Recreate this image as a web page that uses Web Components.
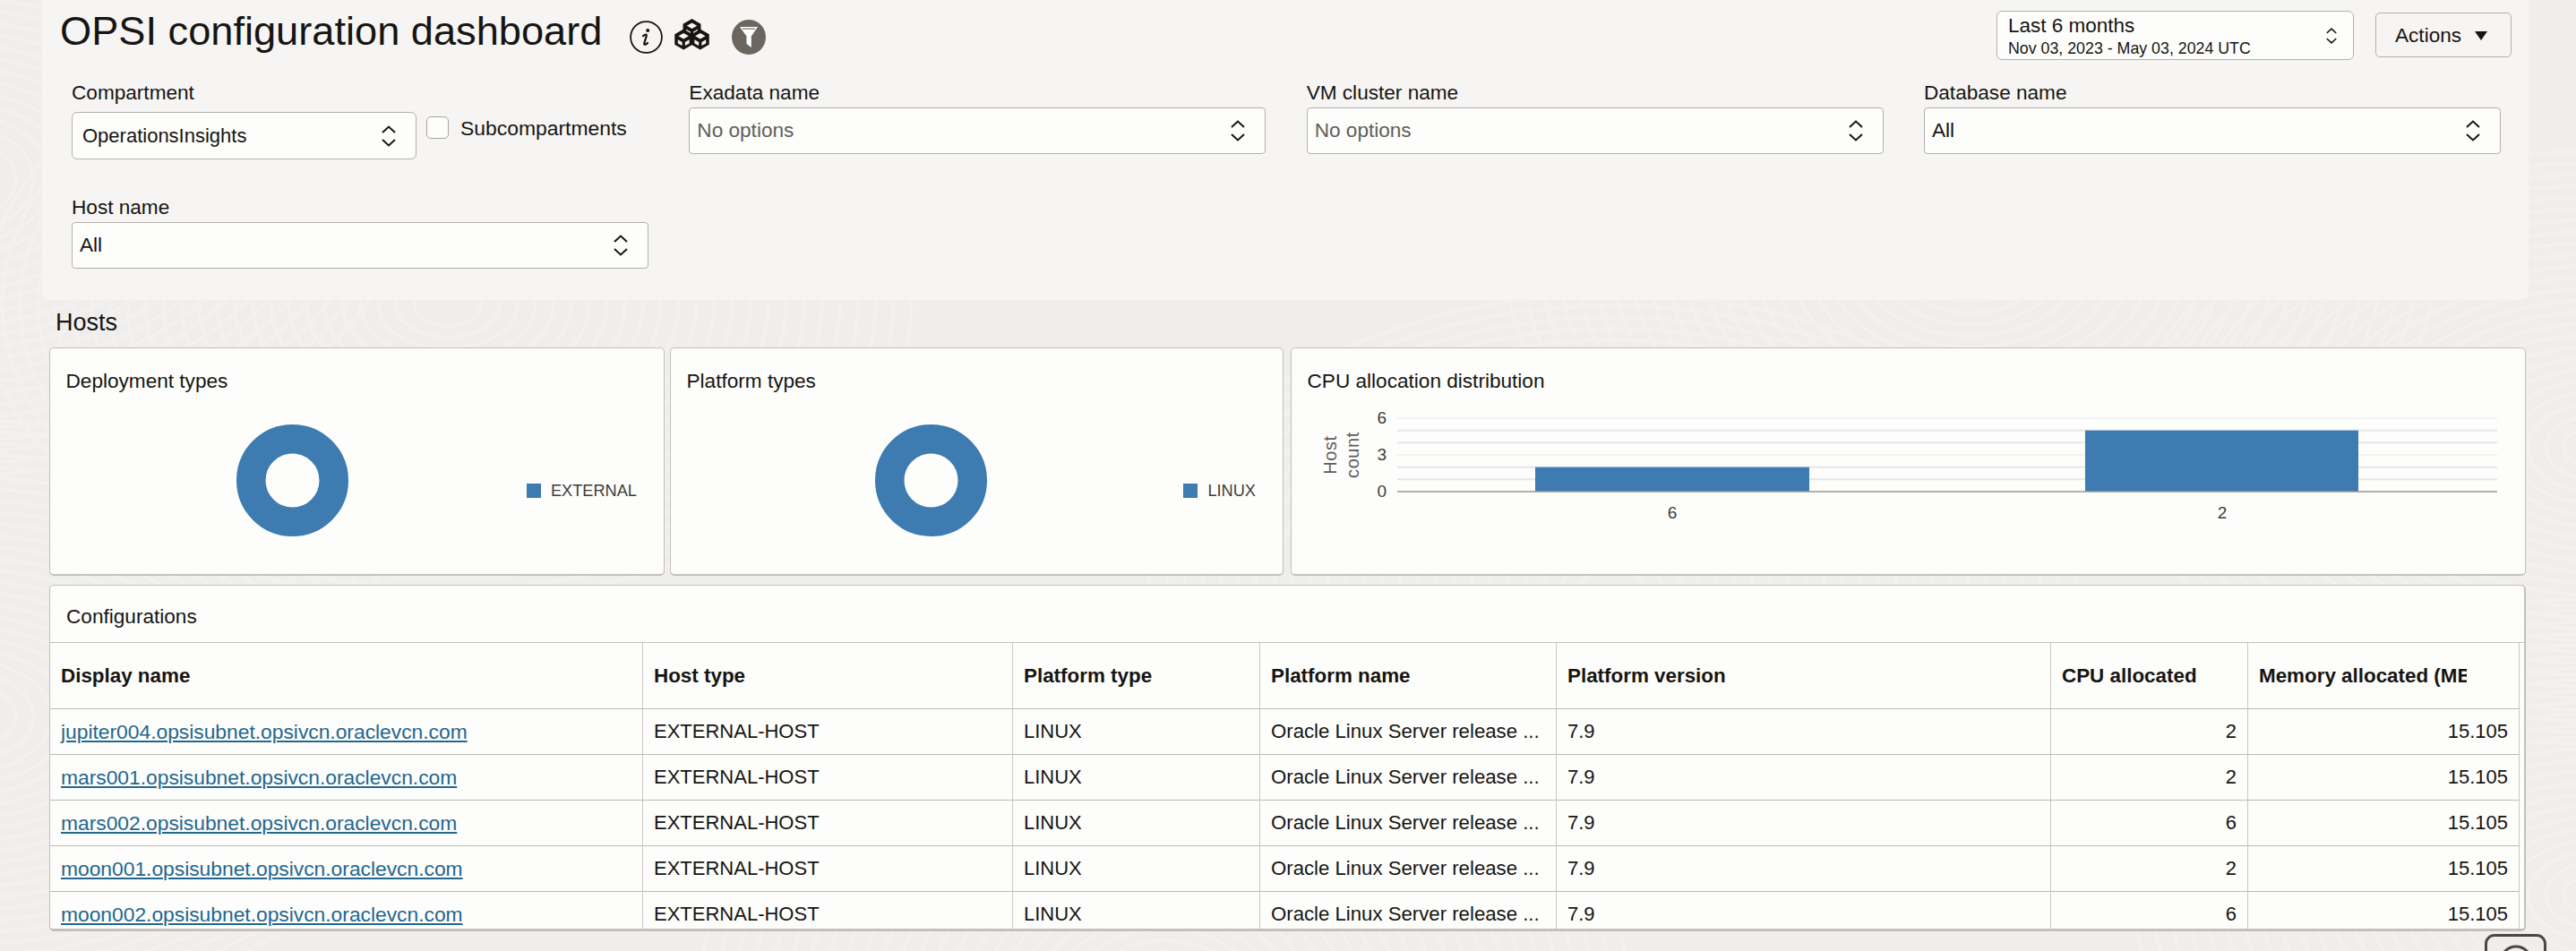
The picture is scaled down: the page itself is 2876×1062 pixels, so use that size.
<!DOCTYPE html>
<html lang="en">
<head>
<meta charset="utf-8">
<title>OPSI configuration dashboard</title>
<style>
  html, body {
    margin: 0;
    height: 1062px;
    overflow: hidden;
    background: #f0eeec;
    font-family: "Liberation Sans", Arial, sans-serif;
    color: #161513;
  }
</style>
</head>
<body>
<bg-texture></bg-texture>
<dash-page>
  <filter-panel heading="OPSI configuration dashboard">
    <range-select slot="tools" value="Last 6 months" range="Nov 03, 2023 - May 03, 2024 UTC"></range-select>
    <actions-button slot="tools">Actions</actions-button>

    <compartment-field label="Compartment" value="OperationsInsights" check="Subcompartments"></compartment-field>
    <lov-select label="Exadata name" value="No options" muted></lov-select>
    <lov-select label="VM cluster name" value="No options" muted></lov-select>
    <lov-select label="Database name" value="All"></lov-select>
    <lov-select label="Host name" value="All"></lov-select>
  </filter-panel>

  <section-title>Hosts</section-title>

  <chart-row>
    <dash-card heading="Deployment types"><donut-chart legend="EXTERNAL"></donut-chart></dash-card>
    <dash-card heading="Platform types"><donut-chart legend="LINUX"></donut-chart></dash-card>
    <dash-card heading="CPU allocation distribution"><bar-chart></bar-chart></dash-card>
  </chart-row>

  <config-table heading="Configurations"></config-table>
</dash-page>
<help-button></help-button>

<script>
// ---------- icon helpers ----------
const chevrons = (w, h) => `
  <svg width="${w}" height="${h}" viewBox="0 0 16 24" fill="none" stroke="#161513" stroke-width="2" aria-hidden="true">
    <polyline points="1,8 8,1.5 15,8"/><polyline points="1,16 8,22.5 15,16"/>
  </svg>`;

const cube = (cx, cy) => {
  const R = 11.5, X = R * 0.866;
  const p = pts => pts.map(([x, y]) => `${(cx + x * R).toFixed(1)},${(cy + y * R).toFixed(1)}`).join(" ");
  return `
    <polygon fill="#161513" points="${cx},${cy - R} ${cx + X},${cy - R / 2} ${cx + X},${cy + R / 2} ${cx},${cy + R} ${cx - X},${cy + R / 2} ${cx - X},${cy - R / 2}"/>
    <polygon fill="#f6f5f3" points="${p([[0, -.62], [.5, -.33], [0, -.04], [-.5, -.33]])}"/>
    <polygon fill="#f6f5f3" points="${p([[-.56, .02], [-.14, .26], [-.14, .62], [-.56, .38]])}"/>
    <polygon fill="#f6f5f3" points="${p([[.56, .02], [.14, .26], [.14, .62], [.56, .38]])}"/>`;
};

// ---------- background with faint swirls ----------
class BgTexture extends HTMLElement {
  constructor() {
    super();
    this.attachShadow({ mode: "open" });
    let arcs = "";
    const centres = [[-60, 200], [-40, 800], [500, 340], [1300, 1100], [2200, 300], [2900, 500], [2900, 1000], [1800, 660]];
    centres.forEach(([cx, cy]) => {
      for (let r = 30; r < 420; r += 16) {
        arcs += `<ellipse cx="${cx}" cy="${cy}" rx="${r * 1.25}" ry="${r * 0.8}"/>`;
      }
    });
    this.shadowRoot.innerHTML = `
      <style>
        :host { position: absolute; inset: 0; display: block; overflow: hidden; }
        svg { display: block; }
      </style>
      <svg width="2876" height="1062" fill="none" stroke="#f2f1ef" stroke-width="4" aria-hidden="true">${arcs}</svg>`;
  }
}

// ---------- page column ----------
class DashPage extends HTMLElement {
  constructor() {
    super();
    this.attachShadow({ mode: "open" });
    this.shadowRoot.innerHTML = `
      <style>
        :host { position: relative; display: block; }
      </style>
      <slot></slot>`;
  }
}

// ---------- top panel: heading, tools, filters ----------
class FilterPanel extends HTMLElement {
  constructor() {
    super();
    this.attachShadow({ mode: "open" });
    this.shadowRoot.innerHTML = `
      <style>
        :host {
          display: block;
          box-sizing: border-box;
          width: 2776px;
          height: 335px;
          margin-left: 47px;
          background: #f6f5f3;
          border-radius: 0 0 8px 8px;
        }
        header {
          display: flex;
          justify-content: space-between;
          height: 92px;
          padding: 0 19px 0 20px;
          box-sizing: border-box;
        }
        .left { display: flex; align-items: flex-start; }
        h1 {
          margin: 10px 0 0;
          font-size: 45.200px;
          line-height: 50px;
          font-weight: 400;
          white-space: nowrap;
        }
        .icons { display: flex; align-items: flex-start; margin-left: 31px; }
        .icons svg { display: block; }
        .info { margin-top: 23px; }
        .cubes { margin: 21px 0 0 13px; }
        .funnel { margin: 22px 0 0 25px; }
        .tools { display: flex; align-items: flex-start; gap: 24px; padding-top: 12px; }
        .filters {
          display: grid;
          grid-template-columns: repeat(4, 644px);
          column-gap: 45.33px;
          row-gap: 42px;
          padding-left: 33px;
        }
      </style>
      <header>
        <div class="left">
          <h1>${this.getAttribute("heading")}</h1>
          <div class="icons">
            <svg class="info" width="37" height="37" viewBox="0 0 37 37" fill="none" stroke="#161513" aria-hidden="true">
              <circle cx="18.5" cy="18.5" r="17.4" stroke-width="1.8"/>
              <circle cx="20.2" cy="11" r="2" fill="#161513" stroke="none"/>
              <path d="M15 17.2c1.4-1.6 3.4-2 3.8-1 .3 1-2.8 8.6-2.6 10 .2 1 2.200 .6 3.800-1.200" stroke-width="2.200" stroke-linecap="round"/>
            </svg>
            <svg class="cubes" width="39" height="35" viewBox="0 0 39 35" aria-hidden="true">
              ${cube(19.5, 11.5)}${cube(10.2, 23)}${cube(28.8, 23)}
            </svg>
            <svg class="funnel" width="38" height="39" viewBox="0 0 38 39" aria-hidden="true">
              <ellipse cx="19" cy="19.500" rx="19" ry="19.500" fill="#6b665f"/>
              <polygon fill="#fff" points="9,8 29,8 21.800,18.500 21.800,31 16.500,27 16.500,18.500"/>
              <rect x="12" y="9.500" width="14" height="1.400" fill="#8a857f"/>
            </svg>
          </div>
        </div>
        <div class="tools"><slot name="tools"></slot></div>
      </header>
      <div class="filters"><slot></slot></div>`;
  }
}

// ---------- labelled select ----------
class LovSelect extends HTMLElement {
  constructor() {
    super();
    this.attachShadow({ mode: "open" });
    const muted = this.hasAttribute("muted");
    this.shadowRoot.innerHTML = `
      <style>
        :host { display: block; font-size: 22.600px; }
        label { display: block; height: 28px; line-height: 24px; }
        .box {
          display: flex;
          align-items: center;
          justify-content: space-between;
          box-sizing: border-box;
          height: 52px;
          padding: 0 22px 0 8px;
          background: #fdfdfb;
          border: 1px solid #b5b0ab;
          border-radius: 4px;
        }
        .val { color: ${muted ? "#615e5b" : "#161513"}; }
        svg { display: block; }
      </style>
      <label>${this.getAttribute("label")}</label>
      <div class="box"><span class="val">${this.getAttribute("value")}</span>${chevrons(16, 24)}</div>`;
  }
}

// ---------- compartment select + checkbox ----------
class CompartmentField extends HTMLElement {
  constructor() {
    super();
    this.attachShadow({ mode: "open" });
    this.shadowRoot.innerHTML = `
      <style>
        :host { display: block; font-size: 22.600px; }
        label { display: block; height: 28px; line-height: 24px; }
        .row { display: flex; align-items: flex-start; margin-top: 5px; }
        .box {
          display: flex;
          align-items: center;
          justify-content: space-between;
          box-sizing: border-box;
          width: 385px;
          height: 53px;
          padding: 1px 22px 0 11px;
          background: #fdfdfb;
          border: 1px solid #b5b0ab;
          border-radius: 6px;
          font-size: 22px;
        }
        .box svg { display: block; }
        .tick {
          box-sizing: border-box;
          width: 25px;
          height: 25px;
          margin: 5px 13px 0 11px;
          background: #fdfdfb;
          border: 1px solid #a9a5a0;
          border-radius: 5px;
        }
        .txt { line-height: 28px; margin-top: 4px; white-space: nowrap; font-size: 22.900px; }
      </style>
      <label>${this.getAttribute("label")}</label>
      <div class="row">
        <div class="box"><span>${this.getAttribute("value")}</span>${chevrons(16, 24)}</div>
        <span class="tick"></span>
        <span class="txt">${this.getAttribute("check")}</span>
      </div>`;
  }
}

// ---------- time range select ----------
class RangeSelect extends HTMLElement {
  constructor() {
    super();
    this.attachShadow({ mode: "open" });
    this.shadowRoot.innerHTML = `
      <style>
        :host {
          display: flex;
          align-items: center;
          justify-content: space-between;
          box-sizing: border-box;
          width: 399px;
          height: 55px;
          padding: 0 18px 0 12px;
          background: #fdfdfb;
          border: 1px solid #b5b0ab;
          border-radius: 6px;
        }
        .a { font-size: 22.500px; line-height: 26px; padding-top: 2px; }
        .b { font-size: 17.800px; line-height: 24px; }
        svg { display: block; }
      </style>
      <div>
        <div class="a">${this.getAttribute("value")}</div>
        <div class="b">${this.getAttribute("range")}</div>
      </div>
      ${chevrons(12, 20)}`;
  }
}

class ActionsButton extends HTMLElement {
  constructor() {
    super();
    this.attachShadow({ mode: "open" });
    this.shadowRoot.innerHTML = `
      <style>
        :host {
          display: flex;
          align-items: center;
          box-sizing: border-box;
          width: 152px;
          height: 50px;
          margin-top: 2px;
          padding: 1px 0 0 21px;
          gap: 15px;
          border: 1px solid #b5b0ab;
          border-radius: 5px;
          font-size: 22.600px;
        }
        svg { display: block; }
      </style>
      <slot></slot>
      <svg width="14" height="10" viewBox="0 0 14 10" aria-hidden="true"><polygon points="0,0 14,0 7,10" fill="#161513"/></svg>`;
  }
}

class SectionTitle extends HTMLElement {
  constructor() {
    super();
    this.attachShadow({ mode: "open" });
    this.shadowRoot.innerHTML = `
      <style>
        :host {
          display: block;
          box-sizing: border-box;
          height: 53px;
          padding: 8px 0 0 62px;
          font-size: 27px;
          line-height: 34px;
        }
      </style>
      <slot></slot>`;
  }
}

class ChartRow extends HTMLElement {
  constructor() {
    super();
    this.attachShadow({ mode: "open" });
    this.shadowRoot.innerHTML = `
      <style>
        :host {
          display: grid;
          grid-template-columns: 687px 687px 1379px;
          column-gap: 6px;
          margin: 0 0 10px 55px;
          height: 255px;
        }
        ::slotted(:nth-child(2)) { margin-right: 2px; }
      </style>
      <slot></slot>`;
  }
}

// ---------- card ----------
class DashCard extends HTMLElement {
  constructor() {
    super();
    this.attachShadow({ mode: "open" });
    this.shadowRoot.innerHTML = `
      <style>
        :host {
          display: block;
          box-sizing: border-box;
          height: 255px;
          background: #fdfdfb;
          border: 1px solid #c4c0bb;
          border-bottom-width: 2px;
          border-radius: 5px;
        }
        h2 {
          margin: 0;
          padding: 23px 0 0 17.500px;
          height: 50px;
          box-sizing: border-box;
          font-size: 22.600px;
          line-height: 28px;
          font-weight: 400;
        }
      </style>
      <h2>${this.getAttribute("heading")}</h2>
      <slot></slot>`;
  }
}

// ---------- donut with legend ----------
class DonutChart extends HTMLElement {
  constructor() {
    super();
    this.attachShadow({ mode: "open" });
    this.shadowRoot.innerHTML = `
      <style>
        :host { display: flex; align-items: flex-start; padding-right: 30px; }
        .plot { flex: 1; display: flex; justify-content: center; padding: 35px 2px 0 0; }
        svg { display: block; }
        .legend {
          display: flex;
          align-items: center;
          gap: 11px;
          margin: 100px 0 0 -11px;
          font-size: 18.200px;
          line-height: 18px;
          color: #3f3d3a;
        }
        .swatch { width: 16px; height: 16px; background: #3d7bb0; }
      </style>
      <div class="plot">
        <svg width="125" height="125" viewBox="0 0 125 125" aria-hidden="true">
          <circle cx="62.500" cy="62.500" r="46.250" fill="none" stroke="#3d7bb0" stroke-width="32.500"/>
        </svg>
      </div>
      <div class="legend"><span class="swatch"></span><span>${this.getAttribute("legend")}</span></div>`;
  }
}

// ---------- bar chart, plotted in pixels on its own canvas ----------
class BarChart extends HTMLElement {
  constructor() {
    super();
    this.attachShadow({ mode: "open" });
    const X0 = 118, X1 = 1346, Y0 = 110, STEP = 13.667;
    const y = v => Y0 - v * STEP;
    let grid = "";
    [6, 5, 4, 3, 2, 1].forEach(v => {
      const major = v % 3 === 0;
      grid += `<line x1="${X0}" x2="${X1}" y1="${y(v)}" y2="${y(v)}" stroke="${major ? "#e6e6e4" : "#e2e7ea"}" stroke-width="${major ? 1 : 2}"/>`;
    });
    const bar = (x, w, v) => `<rect x="${x}" y="${y(v)}" width="${w}" height="${v * STEP}" fill="#3d7bb0"/>`;
    const tick = (t, v) => `<text x="106" y="${y(v) + 6}" text-anchor="end">${t}</text>`;
    this.shadowRoot.innerHTML = `
      <style>
        :host { display: block; }
        svg { display: block; overflow: visible; }
        text { font-family: "Liberation Sans", Arial, sans-serif; font-size: 19px; fill: #3f3d3a; }
        .title { fill: #5f5d5a; font-size: 20px; letter-spacing: .6px; }
      </style>
      <svg width="1377" height="170" aria-hidden="false">
        ${grid}
        ${bar(272, 306, 2)}
        ${bar(886, 305, 5)}
        <line x1="${X0}" x2="${X1}" y1="${Y0}" y2="${Y0}" stroke="#9a9793" stroke-width="1.500"/>
        ${tick("6", 6)}${tick("3", 3)}${tick("0", 0)}
        <text x="425" y="140" text-anchor="middle">6</text>
        <text x="1039" y="140" text-anchor="middle">2</text>
        <g transform="translate(50 69) rotate(-90)">
          <text class="title" x="0" y="0" text-anchor="middle">Host</text>
          <text class="title" x="0" y="25" text-anchor="middle">count</text>
        </g>
      </svg>`;
  }
}

// ---------- configurations table ----------
class ConfigTable extends HTMLElement {
  constructor() {
    super();
    this.attachShadow({ mode: "open" });
    const hosts = [
      ["jupiter004", 2], ["mars001", 2], ["mars002", 6], ["moon001", 2], ["moon002", 6]
    ];
    const rows = hosts.map(([name, cpu]) => `
      <tr>
        <td><a href="#">${name}.opsisubnet.opsivcn.oraclevcn.com</a></td>
        <td>EXTERNAL-HOST</td>
        <td>LINUX</td>
        <td class="wide">Oracle Linux Server release ...</td>
        <td>7.9</td>
        <td class="num">${cpu}</td>
        <td class="num">15.105</td>
      </tr>`).join("");
    this.shadowRoot.innerHTML = `
      <style>
        :host {
          display: block;
          box-sizing: border-box;
          width: 2765px;
          height: 387px;
          margin-left: 55px;
          overflow: hidden;
          background: #fdfdfb;
          border: 1px solid #c4c0bb;
          border-right-width: 2px;
          border-bottom-width: 3px;
          border-radius: 5px;
        }
        h2 {
          margin: 0;
          box-sizing: border-box;
          height: 64px;
          padding: 21px 0 0 18px;
          font-size: 22.600px;
          line-height: 28px;
          font-weight: 400;
          border-bottom: 1px solid #c4c0bb;
        }
        table {
          width: 2757px;
          border-collapse: separate;
          border-spacing: 0;
          table-layout: fixed;
          font-size: 22px;
        }
        th, td {
          box-sizing: border-box;
          padding: 0 12px;
          text-align: left;
          white-space: nowrap;
          overflow: hidden;
          border-right: 1px solid #cbc8c5;
          border-bottom: 1px solid #bdb9b5;
        }
        th { height: 74px; font-weight: 700; font-size: 22.400px; }
        td { height: 51px; }
        .wide { font-size: 22.200px; }
        .num { text-align: right; }
        .clip { overflow: hidden; width: 232px; }
        a {
          color: #23678f;
          font-size: 22.800px;
          text-decoration: underline;
          text-decoration-thickness: 1.500px;
          text-underline-offset: 2px;
        }
      </style>
      <h2>${this.getAttribute("heading")}</h2>
      <table>
        <colgroup>
          <col style="width:662px"><col style="width:413px"><col style="width:276px">
          <col style="width:331px"><col style="width:552px"><col style="width:220px"><col style="width:303px">
        </colgroup>
        <thead>
          <tr>
            <th>Display name</th><th>Host type</th><th>Platform type</th><th>Platform name</th>
            <th>Platform version</th><th>CPU allocated</th><th><div class="clip">Memory allocated (MB)</div></th>
          </tr>
        </thead>
        <tbody>${rows}</tbody>
      </table>`;
  }
}

// ---------- floating help button, cut by the window edge ----------
class HelpButton extends HTMLElement {
  constructor() {
    super();
    this.attachShadow({ mode: "open" });
    this.shadowRoot.innerHTML = `
      <style>
        :host {
          position: absolute;
          left: 2774px;
          top: 1043px;
          display: block;
          box-sizing: border-box;
          width: 69px;
          height: 50px;
          border: 3px solid #4a4845;
          border-radius: 11px;
          background: #f0eeec;
        }
        svg { display: block; margin: 9px 0 0 13px; }
      </style>
      <svg width="38" height="38" viewBox="0 0 38 38" fill="none" stroke="#4a4845" stroke-width="3" aria-hidden="true">
        <circle cx="19" cy="19" r="17"/>
      </svg>`;
  }
}

customElements.define("bg-texture", BgTexture);
customElements.define("dash-page", DashPage);
customElements.define("filter-panel", FilterPanel);
customElements.define("lov-select", LovSelect);
customElements.define("compartment-field", CompartmentField);
customElements.define("range-select", RangeSelect);
customElements.define("actions-button", ActionsButton);
customElements.define("section-title", SectionTitle);
customElements.define("chart-row", ChartRow);
customElements.define("dash-card", DashCard);
customElements.define("donut-chart", DonutChart);
customElements.define("bar-chart", BarChart);
customElements.define("config-table", ConfigTable);
customElements.define("help-button", HelpButton);
</script>
</body>
</html>
